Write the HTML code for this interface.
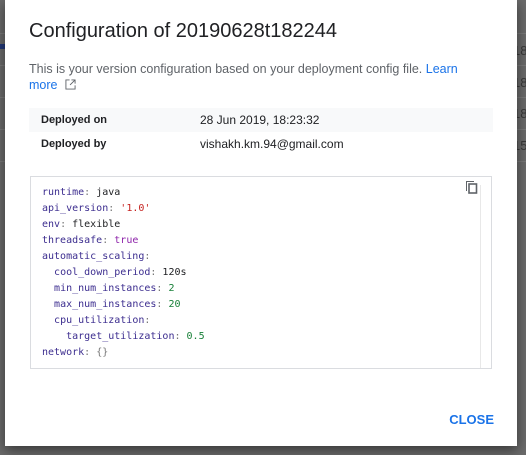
<!DOCTYPE html>
<html><head><style>
body{margin:0;width:526px;height:455px;background:#6b6b6b;position:relative;overflow:hidden;font-family:"Liberation Sans",sans-serif}
.bgl{position:absolute;left:0;width:526px;height:1px;background:#7a7a7a}
.bgt{position:absolute;left:513px;color:#3a3a3a;font-size:13px}
.dlg{position:absolute;left:5px;top:0;width:512px;height:446px;background:#fff;box-shadow:0 4px 12px rgba(0,0,0,.5)}
h1{position:absolute;left:24px;top:20px;margin:0;font-weight:normal;font-size:20px;color:#202124}
.desc{position:absolute;left:24px;top:61px;width:430px;font-size:12.5px;line-height:16px;color:#5f6368}
.desc a{color:#1a73e8;text-decoration:none}
.row{position:absolute;left:24px;width:464px;height:24px;font-size:12px;line-height:24px;color:#202124}
.row b{position:absolute;left:12px;font-size:11px}
.row span{position:absolute;left:171px}
.code{position:absolute;left:25px;top:176px;width:462px;height:193px;border:1px solid #dadce0;box-sizing:border-box;background:#fff}
.code pre{margin:0;position:absolute;left:11px;top:8px;font-family:"DejaVu Sans Mono","Liberation Mono",monospace;font-size:10px;line-height:16px;color:#202124}
.k{color:#3c2d8f}.s{color:#c5221f}.t{color:#8e24aa}.n{color:#188038}.p{color:#777}
.close{position:absolute;right:23px;top:412px;color:#1a73e8;font-weight:bold;font-size:13px}
</style></head><body>
<div class="bgl" style="top:33px"></div><div class="bgl" style="top:65px"></div><div class="bgl" style="top:97px"></div><div class="bgl" style="top:129px"></div><div class="bgl" style="top:161px"></div>
<div style="position:absolute;left:0;top:44px;width:5px;height:5px;background:#243a7a"></div>
<div class="bgt" style="top:43px">18</div><div class="bgt" style="top:75px">18</div><div class="bgt" style="top:106px">18</div><div class="bgt" style="top:138px">15</div>
<div class="dlg">
<h1>Configuration of 20190628t182244</h1>
<div class="desc">This is your version configuration based on your deployment config file. <a>Learn more</a> <svg width="11" height="11" viewBox="0 0 12 12" style="margin-left:4px;vertical-align:-1px"><path d="M5 1H1v10h10V7M7 1h4v4M11 1L5.5 6.5" fill="none" stroke="#5f6368" stroke-width="1"/></svg></div>
<div class="row" style="top:108px;background:#f8f9fa"><b>Deployed on</b><span>28 Jun 2019, 18:23:32</span></div>
<div class="row" style="top:132px"><b>Deployed by</b><span>vishakh.km.94@gmail.com</span></div>
<div class="code">
<div style="position:absolute;left:449px;top:8px;width:1px;height:183px;background:#e8e8e8"></div>
<svg style="position:absolute;left:434px;top:3px" width="13" height="14" viewBox="0 0 13 14"><path d="M1 1h8v1H2v9H1z" fill="#5f6368"/><rect x="4" y="4" width="7.5" height="9" fill="none" stroke="#5f6368" stroke-width="1.6"/></svg>
<pre><span class="k">runtime</span><span class="p">:</span> java
<span class="k">api_version</span><span class="p">:</span> <span class="s">'1.0'</span>
<span class="k">env</span><span class="p">:</span> flexible
<span class="k">threadsafe</span><span class="p">:</span> <span class="t">true</span>
<span class="k">automatic_scaling</span><span class="p">:</span>
  <span class="k">cool_down_period</span><span class="p">:</span> 120s
  <span class="k">min_num_instances</span><span class="p">:</span> <span class="n">2</span>
  <span class="k">max_num_instances</span><span class="p">:</span> <span class="n">20</span>
  <span class="k">cpu_utilization</span><span class="p">:</span>
    <span class="k">target_utilization</span><span class="p">:</span> <span class="n">0.5</span>
<span class="k">network</span><span class="p">:</span> <span class="p">{}</span></pre>
</div>
<div class="close">CLOSE</div>
</div>
</body></html>
